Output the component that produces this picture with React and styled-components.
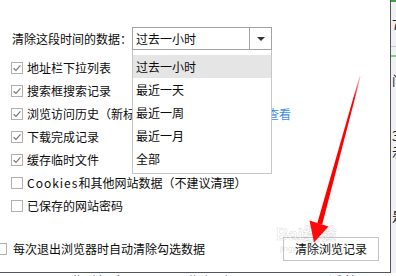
import React from "react";
import styled, { createGlobalStyle } from "styled-components";

const Global = createGlobalStyle`
  html, body { margin: 0; padding: 0; background: #ffffff; }
  body { font-family: "Noto Sans CJK SC", "Noto Sans", sans-serif; }
  #root { width: 396px; height: 276px; overflow: hidden; }
`;

const Page = styled.div`
  position: relative;
  width: 396px;
  height: 276px;
  overflow: hidden;
  display: flex;
  flex-direction: column;
  background: #ffffff;
`;

const Main = styled.div`
  display: flex;
  height: 273px;
`;

const Dialog = styled.div`
  box-sizing: border-box;
  width: 391px;
  height: 273px;
  border-right: 1px solid #4d5566;
  border-bottom: 1px solid #4d5566;
  background: #ffffff;
  padding: 27px 0 0 11px;
  display: flex;
  flex-direction: column;
  font-size: 12px;
  color: #0c0c0c;
`;

const Header = styled.div`
  display: flex;
  align-items: center;
  height: 23px;
`;

const Label = styled.div`
  width: 120px;
  padding-left: 1px;
  white-space: nowrap;
  line-height: 23px;
`;

const SelectWrap = styled.div`
  position: relative;
  width: 140px;
  height: 23px;
  z-index: 2;
`;

const SelectBox = styled.div`
  box-sizing: border-box;
  width: 140px;
  height: 23px;
  border: 1px solid #a3a3a3;
  display: flex;
  background: #fff;
`;

const SelectValue = styled.div`
  flex: 1;
  padding-left: 3px;
  line-height: 21px;
`;

const SelectArrow = styled.div`
  width: 21px;
  border-left: 1px solid #a3a3a3;
  display: flex;
  align-items: center;
  justify-content: center;
`;

const Caret = styled.div`
  width: 0;
  height: 0;
  border-left: 4px solid transparent;
  border-right: 4px solid transparent;
  border-top: 4px solid #333;
  margin-left: 1px;
`;

const DropList = styled.div`
  position: absolute;
  top: 23px;
  left: 0;
  box-sizing: border-box;
  width: 140px;
  height: 124px;
  padding: 5px 0 3px;
  border: 1px solid #c6c6c6;
  border-top: none;
  background: #fff;
`;

const Option = styled.div`
  height: 23px;
  line-height: 23px;
  padding-left: 3px;
  background: ${(p) => (p.$active ? "#e5e5e5" : "transparent")};
`;

const Options = styled.div`
  display: flex;
  flex-direction: column;
  margin-top: 6px;
`;

const Row = styled.div`
  display: flex;
  align-items: center;
  height: 23px;
  gap: ${(p) => p.$gap || 4}px;
  margin-left: ${(p) => p.$shift || 0}px;
  white-space: nowrap;
`;

const BoxEl = styled.div`
  box-sizing: border-box;
  flex: 0 0 12px;
  width: 12px;
  height: 12px;
  border: 1px solid #b0b0b0;
  background: #fff;
  display: flex;
  align-items: center;
  justify-content: center;
`;

const Link = styled.span`
  color: #3b8ee8;
`;

const Latin = styled.span`
  letter-spacing: 1px;
`;

const Footer = styled.div`
  display: flex;
  align-items: center;
  justify-content: space-between;
  margin-top: 20px;
  height: 23px;
  padding-right: 11px;
`;

const Button = styled.div`
  box-sizing: border-box;
  width: 96px;
  height: 24px;
  border: 1px solid #c4c4c4;
  background: #fff;
  display: flex;
  align-items: center;
  justify-content: center;
  font-size: 12px;
  color: #0c0c0c;
`;

const SideStrip = styled.div`
  width: 5px;
  height: 273px;
  background: #f1f1f1;
  display: flex;
  flex-direction: column;
  overflow: hidden;
`;

const StripLine = styled.div`
  height: ${(p) => p.$h}px;
  margin-top: ${(p) => p.$top}px;
  background: ${(p) => p.$c};
  flex: 0 0 auto;
`;

const StripGlyph = styled.div`
  margin-top: ${(p) => p.$top}px;
  margin-left: 1px;
  font-size: 13px;
  line-height: 14px;
  color: #222;
  white-space: nowrap;
`;

const Under = styled.div`
  height: 3px;
  overflow: hidden;
  position: relative;
  display: flex;
  font-size: 14px;
  line-height: 14px;
  color: #222;
  white-space: nowrap;
`;

const UnderText = styled.span`
  margin-left: ${(p) => p.$ml}px;
  margin-top: 1px;
  letter-spacing: ${(p) => p.$ls || 0}px;
`;

const ArrowSvg = styled.svg`
  position: absolute;
  left: 0;
  top: 0;
  pointer-events: none;
  z-index: 5;
`;

const Watermark = styled.div`
  position: absolute;
  left: 276px;
  top: 226px;
  pointer-events: none;
  z-index: 4;
  display: flex;
  flex-direction: column;
  align-items: flex-start;
  font-family: "Liberation Sans", "Noto Sans CJK SC", sans-serif;
`;

const WmMain = styled.div`
  font-size: 17px;
  font-weight: bold;
  line-height: 18px;
  color: rgba(255, 255, 255, 0.35);
  -webkit-text-stroke: 0.6px rgba(120, 120, 120, 0.28);
`;

const WmSub = styled.div`
  font-size: 8px;
  line-height: 9px;
  margin-left: 4px;
  color: rgba(150, 150, 150, 0.3);
`;

function CheckBox({ checked }) {
  return (
    <BoxEl>
      {checked && (
        <svg width="10" height="10" viewBox="0 0 10 10">
          <path d="M1.6 5.2 L4 7.5 L8.4 2.4" fill="none" stroke="#7a7a7a" strokeWidth="1.2" />
        </svg>
      )}
    </BoxEl>
  );
}

const items = [
  { label: "地址栏下拉列表", checked: true },
  { label: "搜索框搜索记录", checked: true },
  { label: "浏览访问历史（新标签页中的全部历史记录）", checked: true, link: "查看" },
  { label: "下载完成记录", checked: true },
  { label: "缓存临时文件", checked: true },
  { latin: "Cookies", label: "和其他网站数据（不建议清理）", checked: false },
  { label: "已保存的网站密码", checked: false },
];

const ranges = ["过去一小时", "最近一天", "最近一周", "最近一月", "全部"];

export default function App() {
  return (
    <>
      <Global />
      <Page>
        <Main>
          <Dialog>
            <Header>
              <Label>清除这段时间的数据：</Label>
              <SelectWrap>
                <SelectBox>
                  <SelectValue>过去一小时</SelectValue>
                  <SelectArrow>
                    <Caret />
                  </SelectArrow>
                </SelectBox>
                <DropList>
                  {ranges.map((r, i) => (
                    <Option key={r} $active={i === 0}>
                      {r}
                    </Option>
                  ))}
                </DropList>
              </SelectWrap>
            </Header>
            <Options>
              {items.map((it) => (
                <Row key={it.label}>
                  <CheckBox checked={it.checked} />
                  <span>
                    {it.latin && <Latin>{it.latin}</Latin>}
                    {it.label}
                    {it.link && <Link>{it.link}</Link>}
                  </span>
                </Row>
              ))}
            </Options>
            <Footer>
              <Row $shift={-16} $gap={6}>
                <CheckBox checked={false} />
                <span>每次退出浏览器时自动清除勾选数据</span>
              </Row>
              <Button>清除浏览记录</Button>
            </Footer>
          </Dialog>
          <SideStrip>
            <StripLine $h={2} $top={0} $c="#3da33d" />
            <StripGlyph $top={16}>7</StripGlyph>
            <StripLine $h={1} $top={14} $c="#c8c8c8" />
            <StripLine $h={2} $top={8} $c="#8cc97a" />
            <StripGlyph $top={16}>门</StripGlyph>
            <StripGlyph $top={42}>3</StripGlyph>
            <StripGlyph $top={2}>示</StripGlyph>
            <StripGlyph $top={50}>是</StripGlyph>
          </SideStrip>
        </Main>
        <Under>
          <UnderText $ml={70} $ls={4}>览浏则</UnderText>
          <UnderText $ml={62}>北</UnderText>
          <UnderText $ml={4} $ls={6}>阅阅</UnderText>
          <UnderText $ml={68} $ls={2}>日话筑</UnderText>
        </Under>
        <Watermark>
          <WmMain>Bai经验</WmMain>
          <WmSub>jingyan.baidu.com</WmSub>
        </Watermark>
        <ArrowSvg width="396" height="276" viewBox="0 0 396 276">
          <defs>
            <linearGradient id="shaft" x1="360" y1="76" x2="340" y2="140" gradientUnits="userSpaceOnUse">
              <stop offset="0" stopColor="#ff0000" stopOpacity="0.2" />
              <stop offset="0.35" stopColor="#ff0000" stopOpacity="1" />
              <stop offset="1" stopColor="#ff0000" stopOpacity="1" />
            </linearGradient>
          </defs>
          <polygon points="359.6,76 360.6,76.5 322.2,224.5 317.2,223.5" fill="url(#shaft)" />
          <polygon points="309.5,220.5 328.5,226.5 314,242.5" fill="#ff0a0a" />
        </ArrowSvg>
      </Page>
    </>
  );
}
